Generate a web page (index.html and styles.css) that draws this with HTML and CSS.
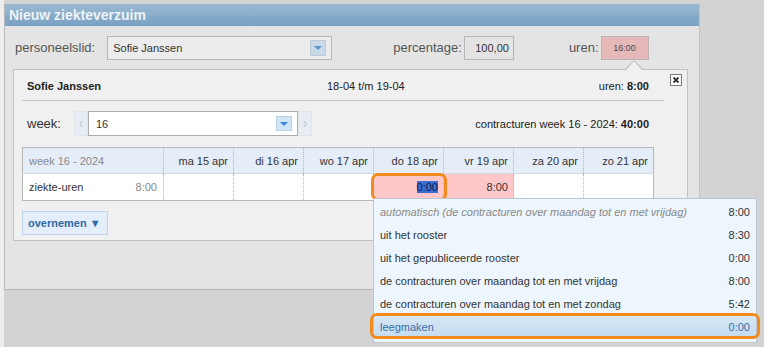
FILE: index.html
```html
<!DOCTYPE html>
<html lang="nl">

<head>
    <meta charset="UTF-8">
    <meta name="viewport" content="width=device-width, initial-scale=1.0">
    <title>Nieuw ziekteverzuim</title>
    <link rel="stylesheet" href="styles.css">
</head>

<body>
    <div class="stage">
        <div class="dialog">
            <div class="titlebar">Nieuw ziekteverzuim</div>

            <div class="form-row">
                <label class="lbl">personeelslid:</label>
                <div class="combo">
                    <span>Sofie Janssen</span>
                    <span class="combo-btn"><span class="caret"></span></span>
                </div>
                <label class="lbl lbl-pct">percentage:</label>
                <div class="num">100,00</div>
                <label class="lbl lbl-uren">uren:</label>
                <div class="uren-box">16:00</div>
            </div>

            <div class="panel">
                <span class="close">
                    <svg width="12" height="12" viewBox="0 0 12 12">
                        <rect x="0.5" y="0.5" width="11" height="11" fill="#fbfbfb" stroke="#7a7a7a" />
                        <path d="M3.5 3.5 L8.5 8.5 M8.5 3.5 L3.5 8.5" stroke="#333" stroke-width="1.8" />
                    </svg>
                </span>

                <div class="panel-head">
                    <b>Sofie Janssen</b>
                    <span>18-04 t/m 19-04</span>
                    <span class="head-uren">uren: <b>8:00</b></span>
                </div>

                <div class="week-row">
                    <span class="week-lbl">week:</span>
                    <span class="step">&lsaquo;</span>
                    <div class="week-select">
                        <span>16</span>
                        <span class="week-btn"><span class="caret caret-dark"></span></span>
                    </div>
                    <span class="step">&rsaquo;</span>
                    <span class="contract">contracturen week 16 - 2024: <b>40:00</b></span>
                </div>

                <table class="grid">
                    <colgroup>
                        <col style="width: 141px">
                        <col style="width: 70px">
                        <col style="width: 70px">
                        <col style="width: 70px">
                        <col style="width: 70px">
                        <col style="width: 70px">
                        <col style="width: 70px">
                        <col style="width: 70px">
                    </colgroup>
                    <thead>
                        <tr>
                            <th class="wk">week 16 - 2024</th>
                            <th>ma 15 apr</th>
                            <th>di 16 apr</th>
                            <th>wo 17 apr</th>
                            <th>do 18 apr</th>
                            <th>vr 19 apr</th>
                            <th>za 20 apr</th>
                            <th>zo 21 apr</th>
                        </tr>
                    </thead>
                    <tbody>
                        <tr>
                            <td class="first"><span>ziekte-uren</span><span class="muted">8:00</span></td>
                            <td></td>
                            <td></td>
                            <td></td>
                            <td class="sick active">
                                <span class="sel">0:00</span>
                                <div class="menu">
                                    <div class="menu-item auto"><span>automatisch (de contracturen over maandag tot en met vrijdag)</span><span>8:00</span></div>
                                    <div class="menu-item"><span>uit het rooster</span><span>8:30</span></div>
                                    <div class="menu-item"><span>uit het gepubliceerde rooster</span><span>0:00</span></div>
                                    <div class="menu-item"><span>de contracturen over maandag tot en met vrijdag</span><span>8:00</span></div>
                                    <div class="menu-item"><span>de contracturen over maandag tot en met zondag</span><span>5:42</span></div>
                                    <div class="menu-item hover"><span>leegmaken</span><span>0:00</span></div>
                                </div>
                            </td>
                            <td class="sick">8:00</td>
                            <td></td>
                            <td></td>
                        </tr>
                    </tbody>
                </table>

                <button class="overnemen">overnemen &#9660;</button>
            </div>
        </div>
    </div>
</body>

</html>
```

FILE: styles.css
```css
body {
    margin: 0;
    background: #eeeeee;
    font-family: "Liberation Sans", Arial, sans-serif;
    color: #333;
}

.stage {
    margin-left: 4px;
    height: 347px;
    padding-top: 4px;
    box-sizing: border-box;
    background: #d3d3d3;
    overflow: hidden;
}

.dialog {
    width: 696px;
    height: 286px;
    box-sizing: border-box;
    background: #e4e4e4;
    border-left: 1px solid #b7b7b7;
    border-right: 1px solid #c2c2c2;
    border-bottom: 1px solid #b7b7b7;
}

.titlebar {
    height: 22px;
    line-height: 22px;
    padding-left: 4px;
    font-size: 14px;
    font-weight: bold;
    color: #eef3f7;
    background: linear-gradient(to bottom, #97b7d0 0%, #8fb1cc 45%, #85aac8 55%, #7aa2c4 100%);
}

.form-row {
    display: flex;
    align-items: center;
    height: 24px;
    margin-top: 10px;
    padding-left: 10px;
}

.lbl {
    font-size: 13px;
    color: #555;
    line-height: 24px;
}

.combo {
    display: flex;
    align-items: center;
    justify-content: space-between;
    width: 225px;
    height: 24px;
    margin-left: 12px;
    box-sizing: border-box;
    padding: 0 5px 0 5px;
    border: 1px solid #b6b6b6;
    background: #ececec;
    font-size: 11px;
    color: #333;
}

.combo-btn {
    display: flex;
    align-items: center;
    justify-content: center;
    width: 16px;
    height: 16px;
    box-sizing: border-box;
    background: #c9d9e7;
    border: 1px solid #b9cadb;
}

.caret {
    width: 0;
    height: 0;
    border-left: 4px solid transparent;
    border-right: 4px solid transparent;
    border-top: 4px solid #5e94c9;
}

.caret-dark {
    border-top-color: #3a87d6;
}

.lbl-pct {
    margin-left: 61px;
}

.num {
    width: 50px;
    height: 24px;
    margin-left: 2px;
    box-sizing: border-box;
    border: 1px solid #b6b6b6;
    text-align: right;
    padding-right: 4px;
    line-height: 22px;
    font-size: 11px;
}

.lbl-uren {
    margin-left: 55px;
}

.uren-box {
    width: 48px;
    height: 24px;
    margin-left: 2px;
    box-sizing: border-box;
    border: 1px solid #bdb3b3;
    background: #e6b9b9;
    text-align: center;
    line-height: 22px;
    font-size: 9px;
    color: #4a4a4a;
}

.panel {
    position: relative;
    width: 675px;
    height: 172px;
    margin: 9px 0 0 8px;
    box-sizing: border-box;
    background: #f0f0f0;
    border: 1px solid #c2c2c2;
}

.panel::before {
    content: "";
    position: absolute;
    top: -10px;
    left: 611px;
    border-left: 9px solid transparent;
    border-right: 9px solid transparent;
    border-bottom: 9px solid #bdbdbd;
}

.panel::after {
    content: "";
    position: absolute;
    top: -9px;
    left: 612px;
    border-left: 8px solid transparent;
    border-right: 8px solid transparent;
    border-bottom: 9px solid #f0f0f0;
}

.close {
    position: absolute;
    top: 4px;
    left: 656px;
    width: 12px;
    height: 12px;
    line-height: 0;
}

.panel-head {
    display: grid;
    grid-template-columns: 300px 1fr auto;
    margin: 0 23px 0 8px;
    padding: 10px 15px 7px 5px;
    border-bottom: 1px solid #c6c6c6;
    font-size: 11px;
    line-height: 13px;
    color: #222;
}

.week-row {
    display: flex;
    align-items: center;
    height: 25px;
    margin-top: 10px;
    padding: 0 38px 0 13px;
}

.week-lbl {
    font-size: 13px;
    color: #333;
    margin-right: 13px;
}

.step {
    width: 14px;
    height: 25px;
    box-sizing: border-box;
    background: #e7edf3;
    border: 1px solid #e0e6ec;
    color: #b9c8d6;
    font-size: 14px;
    line-height: 22px;
    text-align: center;
}

.week-select {
    display: flex;
    align-items: center;
    justify-content: space-between;
    width: 210px;
    height: 25px;
    box-sizing: border-box;
    padding: 0 5px 0 7px;
    background: white;
    border: 1px solid #adadad;
    font-size: 11px;
}

.week-btn {
    display: flex;
    align-items: center;
    justify-content: center;
    width: 16px;
    height: 15px;
    box-sizing: border-box;
    background: #d2e5f7;
    border: 1px solid #b4cfe8;
}

.contract {
    margin-left: auto;
    font-size: 11px;
    color: #222;
}

.grid {
    margin: 11px 0 0 8px;
    border-collapse: collapse;
    table-layout: fixed;
    width: 631px;
    border: 1px solid #b8b8b8;
    font-size: 11px;
}

.grid th {
    height: 25px;
    padding: 0 5px 0 0;
    background: #e5edf8;
    border-left: 1px dotted #b4b4b4;
    border-bottom: 1px solid #d2d8e0;
    text-align: right;
    font-weight: normal;
    color: #333;
}

.grid th.wk {
    text-align: left;
    padding-left: 6px;
    color: #8a8a8a;
    border-left: none;
}

.grid td {
    height: 26px;
    padding: 0 5px 0 0;
    background: white;
    border-left: 1px dotted #b4b4b4;
    text-align: right;
    color: #333;
}

.grid td.first {
    display: flex;
    align-items: center;
    justify-content: space-between;
    padding: 0 6px 0 6px;
    border-left: none;
}

.muted {
    color: #888;
}

.grid td.sick {
    background: #ffc7c7;
}

.active {
    position: relative;
}

.active::after {
    content: "";
    position: absolute;
    top: -1px;
    left: -3px;
    right: -4px;
    bottom: -1px;
    border: 3px solid #f28a1e;
    border-radius: 7px;
}

.sel {
    background: #3b6ed3;
    color: #0e1d57;
}

.menu {
    position: absolute;
    top: calc(100% - 2px);
    left: -1px;
    z-index: 5;
    width: 384px;
    box-sizing: border-box;
    padding: 1px 0 4px 0;
    background: #edf6fd;
    border: 1px solid #bcc6cf;
    text-align: left;
}

.menu-item {
    display: flex;
    justify-content: space-between;
    align-items: center;
    height: 23px;
    padding: 0 6px;
    font-size: 11px;
    color: #333;
}

.menu-item.auto span:first-child {
    font-style: italic;
    color: #888;
}

.menu-item.hover {
    position: relative;
    background: linear-gradient(to bottom, #d9e9f6 0%, #cde1f2 50%, #c3dbef 100%);
    color: #3a6fa8;
}

.menu-item.hover::after {
    content: "";
    position: absolute;
    top: -2px;
    left: -4px;
    right: -4px;
    bottom: -1px;
    border: 3px solid #f28a1e;
    border-radius: 7px;
}

.overnemen {
    display: block;
    margin: 10px 0 0 8px;
    width: 86px;
    height: 24px;
    padding: 0 0 0 5px;
    text-align: left;
    background: #e3eefa;
    border: 1px solid #bfd5ea;
    font-family: "Liberation Sans", Arial, sans-serif;
    font-size: 11px;
    font-weight: bold;
    color: #2e69a5;
}
```
